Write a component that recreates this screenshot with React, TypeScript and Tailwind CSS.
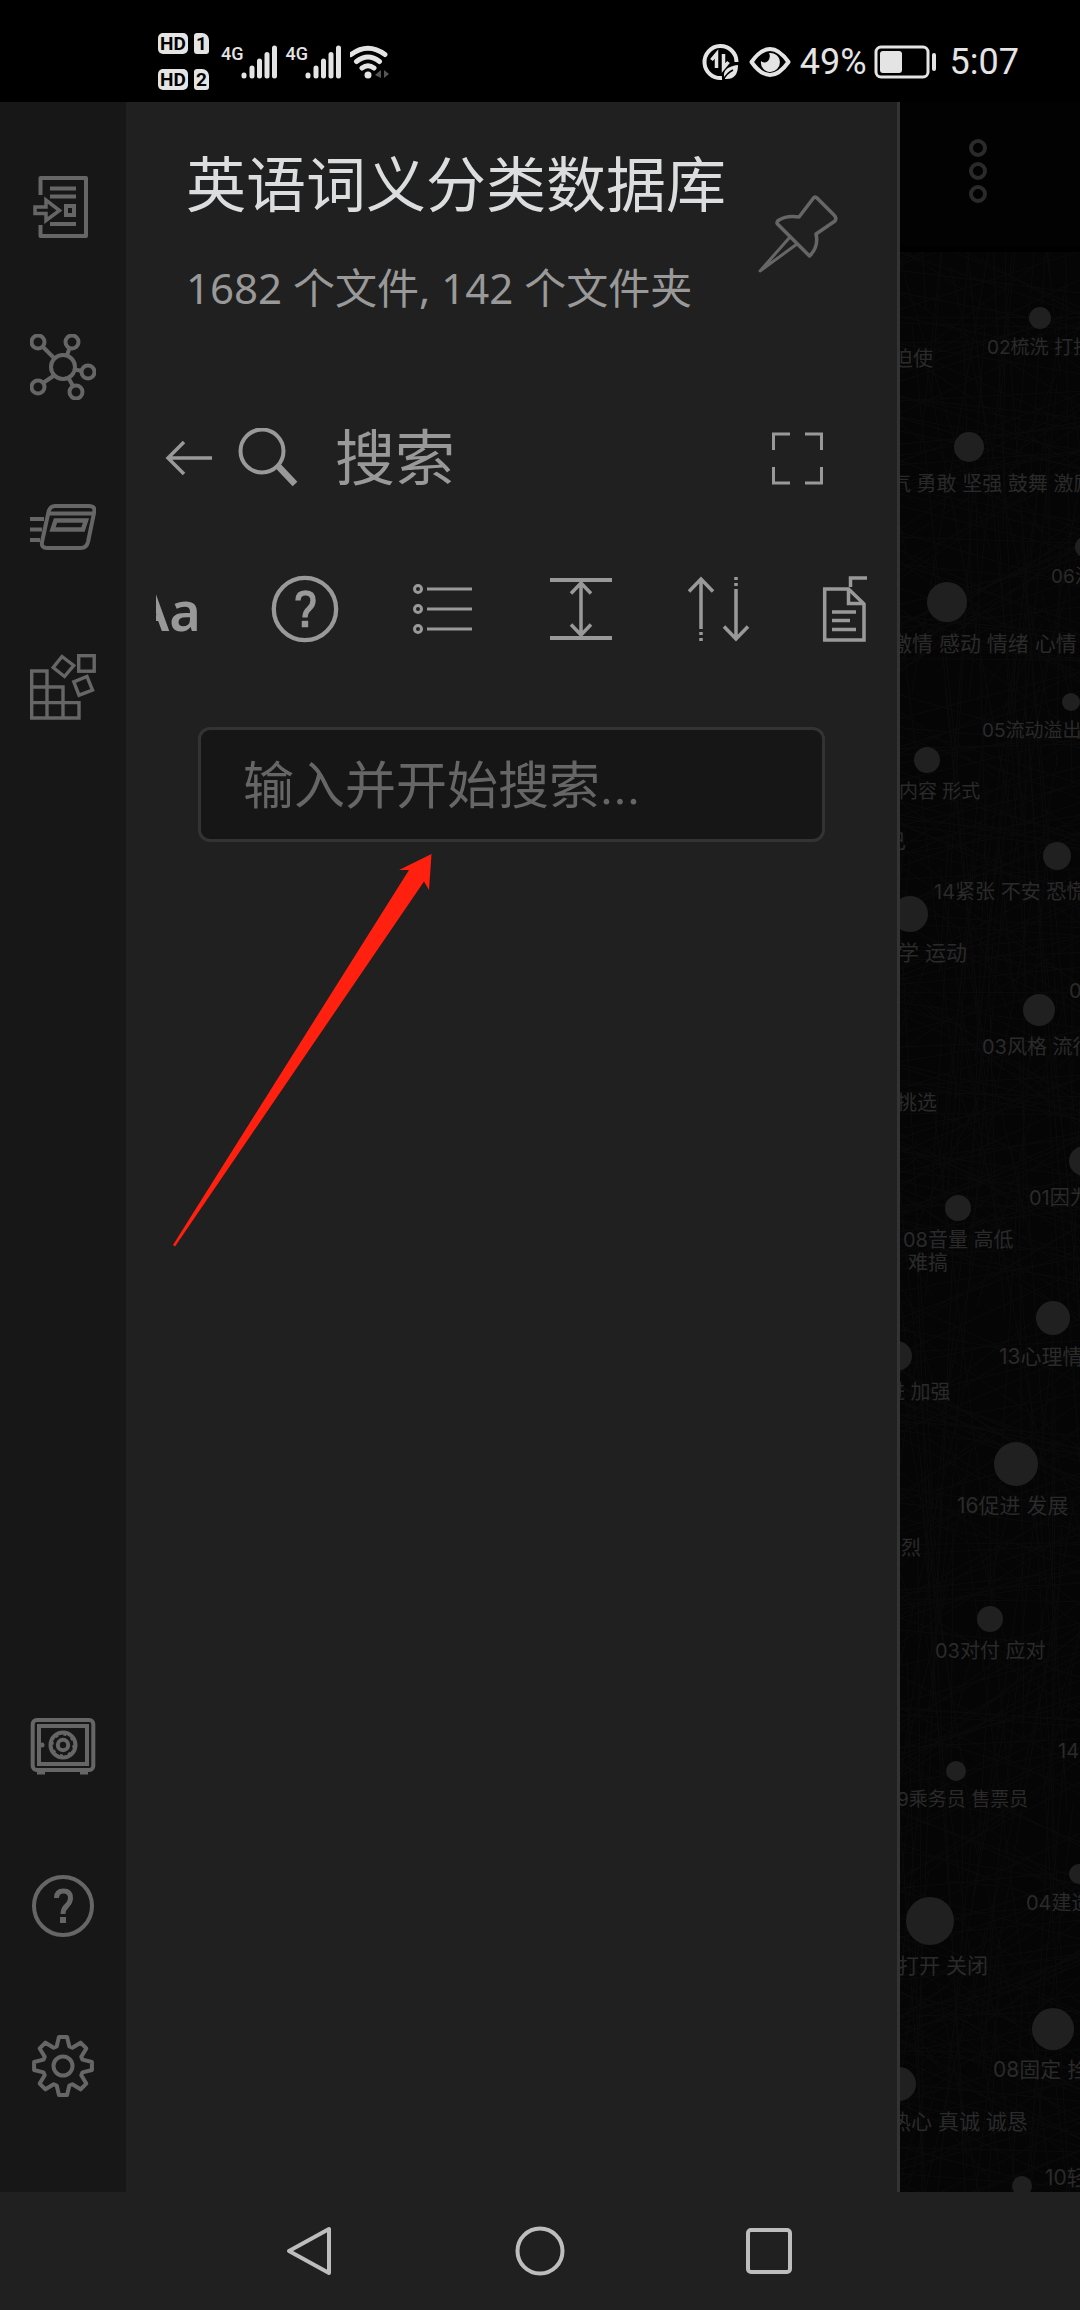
import React from 'react';

type IconProps = { children: React.ReactNode; className?: string; box?: string; width?: number };

function Icon({ children, className = 'size-[66px]', box = '0 0 66 66', width = 4 }: IconProps) {
  return (
    <svg className={className} viewBox={box} fill="none" stroke="currentColor" strokeWidth={width} aria-hidden="true">
      {children}
    </svg>
  );
}

/* ---------- status bar ---------- */

function HdBadge({ sim }: { sim: string }) {
  return (
    <div className="flex gap-[6px]">
      <span className="flex h-[21px] w-[30px] items-center justify-center rounded-[5px] bg-[#e4e4e4] text-[19px] font-bold leading-none text-black">
        HD
      </span>
      <span className="flex h-[21px] w-[15px] items-center justify-center rounded-[3px] rounded-tr-[7px] bg-[#e4e4e4] text-[19px] font-bold leading-none text-black">
        {sim}
      </span>
    </div>
  );
}

function Signal() {
  return (
    <div className="flex h-[34px] items-start">
      <span className="text-[18px] font-medium leading-[18px]">4G</span>
      <Icon className="-ml-1 h-[34px] w-[38px]" box="0 0 38 34" width={5}>
        <g strokeLinecap="round">
          <path d="M4 30v1M12 23v8M19.500 16v15M27 9.500v21.500M34.500 3v28" />
        </g>
      </Icon>
    </div>
  );
}

function StatusBar() {
  return (
    <header className="flex h-[102px] shrink-0 items-center justify-between bg-black pl-[158px] pr-[61px] pt-[21px] text-[#e4e4e4]">
      <div className="flex items-center">
        <div className="mr-3 flex flex-col gap-[15px]">
          <HdBadge sim="1" />
          <HdBadge sim="2" />
        </div>
        <div className="flex gap-2">
          <Signal />
          <Signal />
          <Icon className="h-[34px] w-[44px]" box="2 0 44 34" width={5}>
            <path d="M3 9.500Q20 -3 37 9.500M8.500 16.500Q20 7.500 31.500 16.500M14 23Q20 18.500 26 23" strokeLinecap="round" />
            <circle cx="20" cy="30" r="3.500" fill="currentColor" stroke="none" />
            <path d="M33 25v8l-6-3zM36 25l5 4l-5 4z" fill="#555" stroke="none" />
          </Icon>
        </div>
      </div>
      <div className="flex items-center">
        <Icon className="mr-[10px] size-[38px]" box="0 0 38 38">
          <path d="M35.500 19A16 16 0 1 0 21 35" />
          <path d="M15.500 25V11l-5 6M22.500 11v14l5-6" strokeWidth="3.500" />
          <path d="M23 33Q22 24 37 22Q37 37 24 36Z" fill="currentColor" stroke="none" />
          <path d="M22 37Q26 30 32 27" stroke="#000" strokeWidth="1.500" />
        </Icon>
        <Icon className="mr-[9px] h-[30px] w-[42px]" box="0 0 42 30">
          <path d="M2.500 15Q21 -11 39.500 15Q21 41 2.500 15Z" strokeLinejoin="round" />
          <path d="M20 6A9.500 9.500 0 1 1 12 14Q15 17 19 14Q22 10 20 6Z" fill="currentColor" stroke="none" />
        </Icon>
        <span className="text-[36px] leading-[36px]">49%</span>
        <Icon className="ml-[7px] mr-[12px] h-[34px] w-[64px]" box="0 0 64 34">
          <rect x="2" y="2" width="52" height="30" rx="5" strokeWidth="3" />
          <rect x="6" y="6" width="22" height="22" rx="3" fill="currentColor" stroke="none" />
          <path d="M60 10v14" strokeLinecap="round" />
        </Icon>
        <span className="text-[36px] leading-[36px]">5:07</span>
      </div>
    </header>
  );
}

/* ---------- left rail ---------- */

const gearPath = (() => {
  const points: string[] = [];
  const at = (radius: number, deg: number) => {
    const a = (deg * Math.PI) / 180;
    points.push(`${(33 + radius * Math.cos(a)).toFixed(2)} ${(33 + radius * Math.sin(a)).toFixed(2)}`);
  };
  for (let k = 0; k < 8; k += 1) {
    const c = k * 45;
    at(20.500, c - 18);
    at(29.200, c - 8);
    at(29.200, c + 8);
    at(20.500, c + 18);
  }
  return `M${points.join('L')}Z`;
})();

function QuestionMark() {
  return (
    <>
      <circle cx="33" cy="33" r="29" />
      <path d="M26.500 25Q26.500 18 33.500 18Q40.500 18 40.500 25Q40.500 29 37 32.500Q33 36 33 41" strokeWidth="5" />
      <path d="M33 44v6" strokeWidth="6" />
    </>
  );
}

const topRail = [
  {
    label: '快速切换',
    icon: (
      <>
        <path d="M10.500 21V4H56V62H10.500V51" strokeLinejoin="round" />
        <path d="M20 14.500h26M20 22.500h26M20 50h26" />
        <rect x="36" y="32" width="8" height="9" />
        <path d="M5 33H16V26L29.500 36.500L16 46.500V39.500H5Z" strokeWidth="3.500" />
      </>
    ),
  },
  {
    label: '关系图谱',
    icon: (
      <>
        <circle cx="33" cy="33" r="12" />
        <circle cx="8" cy="8" r="6.500" />
        <circle cx="42" cy="8" r="6.500" />
        <circle cx="58" cy="38" r="6.500" />
        <circle cx="46" cy="58" r="6.500" />
        <circle cx="8" cy="53" r="6.500" />
        <path d="M12.500 12.500L24.500 24.500M39.500 14L37 21.500M45 35.500L52 37M38.500 44L43 52M24 41.500L13 49" />
      </>
    ),
  },
  {
    label: '闪念卡片',
    icon: (
      <>
        <path d="M0 25H14M0 35.500H12M0 46H10" />
        <path d="M25 12H59Q66 12 64 19L58 48Q56.500 54 51 54H17Q11 54 12 48L18.500 18Q20 12 25 12Z" />
        <path d="M18 19.500H64" />
        <path d="M25.500 26.500H56L53 35.500H22.500Z" strokeWidth="4.500" />
      </>
    ),
  },
  {
    label: '模块',
    icon: (
      <g strokeWidth="3.400">
        <path d="M1.700 17H17V64M1.700 15.300V64H49V48.600H1.700M1.700 33H33V64" />
        <rect x="48.700" y="1.700" width="15.500" height="15.500" />
        <path d="M32 2.500L43.700 11.500L34.500 22.500L23.200 13.500Z" />
        <path d="M43.800 27.800L57 22.500L62.500 36L49 41.200Z" />
      </g>
    ),
  },
];

const bottomRail = [
  {
    label: '仓库',
    icon: (
      <>
        <rect x="2.700" y="7" width="60.600" height="50" rx="4" />
        <rect x="9" y="13" width="48" height="38" />
        <circle cx="33" cy="32" r="12.500" strokeWidth="4" />
        <circle cx="33" cy="32" r="10.500" strokeWidth="2" strokeDasharray="3 5.250" />
        <circle cx="33" cy="32" r="5.200" />
        <path d="M7 60h8M50 60h8" strokeWidth="3" />
        <circle cx="12" cy="32" r="2.500" fill="currentColor" stroke="none" />
      </>
    ),
  },
  { label: '帮助', icon: <QuestionMark /> },
  {
    label: '设置',
    icon: (
      <>
        <path d={gearPath} strokeLinejoin="round" />
        <circle cx="33" cy="33" r="9.500" />
      </>
    ),
  },
];

function RailButtons({ items }: { items: { label: string; icon: React.ReactNode }[] }) {
  return (
    <div className="flex flex-col">
      {items.map((item) => (
        <button key={item.label} type="button" aria-label={item.label} className="flex h-[160px] items-center justify-center">
          <Icon>{item.icon}</Icon>
        </button>
      ))}
    </div>
  );
}

/* ---------- search panel ---------- */

const tools = [
  {
    label: '帮助',
    icon: (
      <g transform="translate(-2.500 -2.500) scale(1.075)">
        <QuestionMark />
      </g>
    ),
  },
  {
    label: '列表',
    icon: (
      <g strokeWidth="3">
        <circle cx="8" cy="13" r="3.500" />
        <circle cx="8" cy="33" r="3.500" />
        <circle cx="8" cy="53" r="3.500" />
        <path d="M17 13h45M17 33h45M17 53h45" />
      </g>
    ),
  },
  {
    label: '展开',
    icon: (
      <>
        <path d="M2 4h62M2 62h62" />
        <path d="M33 7v52M23 17.500L33 7l10 10.500M23 48.500L33 59l10-10.500" strokeWidth="3.500" />
      </>
    ),
  },
  {
    label: '排序',
    icon: (
      <g strokeWidth="3.500">
        <path d="M15 3v50M3 15.500L15 3l12 12.500M50 13v50M38 50.500L50 63l12-12.500" />
        <path d="M15 56v3M15 62v3M50 1v3M50 7v3" />
      </g>
    ),
  },
  {
    label: '复制',
    icon: (
      <g strokeWidth="3.500">
        <path d="M0.700 13H24.500L40 28V64H0.700Z" />
        <path d="M24.500 13V27.500H40M8 36h24M8 44.500h18M8 53.500h24" />
        <path d="M26.500 11V2H50L64 16V52H44" />
      </g>
    ),
  },
];

function SearchPanel() {
  return (
    <section className="relative flex min-w-0 flex-1 flex-col border-r-[3px] border-[#333] bg-[#202020] pt-[49px] text-[#999]">
      <div className="flex items-center justify-between pl-[60px] pr-[59px]">
        <div className="whitespace-nowrap">
          <h1 className="text-[60px] leading-[72px] text-[#dcddde]">英语词义分类数据库</h1>
          <p className="mt-[41px] font-['Noto_Sans','Noto_Sans_CJK_SC',sans-serif] text-[42px] leading-[48px]">
            1682 个文件, 142 个文件夹
          </p>
        </div>
        <button type="button" aria-label="固定侧栏" className="pt-[4px] text-[#666]">
          <Icon className="size-[80px]" box="0 0 80 80">
            <path
              d="M55.500 4Q57 2 59 4L76 21Q79 24 77 27L58 40Q61 53 51.500 62L19.500 30Q18 28 21 26Q29 21 41 23Z"
              strokeWidth="3.500"
              strokeLinejoin="round"
            />
            <path d="M32 43L2 77L39 50" strokeWidth="3" strokeLinejoin="round" />
          </Icon>
        </button>
      </div>

      <div className="mt-[96px] flex h-[100px] items-center pl-[38px] pr-[73px]">
        <button type="button" aria-label="返回">
          <Icon className="h-[40px] w-[50px]" box="0 0 50 40">
            <path d="M48 20H4M20 4L4 20L20 36" strokeWidth="3.500" />
          </Icon>
        </button>
        <Icon className="ml-[24px] size-[60px]" box="0 0 60 60">
          <circle cx="24" cy="23" r="21.500" />
          <path d="M40 38L57 56" strokeWidth="6.500" />
        </Icon>
        <h2 className="ml-[37px] pt-1 text-[60px] leading-[72px]">搜索</h2>
        <button type="button" aria-label="全屏" className="ml-auto">
          <Icon className="size-[54px]" box="0 0 54 54">
            <path d="M3.500 19V3H20M35 3H51.500V19M51.500 36V52H35M20 52H3.500V36" strokeWidth="3" />
          </Icon>
        </button>
      </div>

      <div className="ml-[30px] mr-[30px] mt-[51px] flex h-[100px] overflow-hidden">
        <button
          type="button"
          aria-label="区分大小写"
          className="-ml-[58px] w-[138px] shrink-0 text-center font-['Noto_Sans'] text-[54px] font-semibold leading-[102px]"
        >
          Aa
        </button>
        {tools.map((tool) => (
          <button key={tool.label} type="button" aria-label={tool.label} className="flex w-[138px] shrink-0 items-center justify-center">
            <Icon className="size-[66px] overflow-visible">{tool.icon}</Icon>
          </button>
        ))}
      </div>

      <div className="mt-[68px] flex px-[72px]">
        <input
          type="text"
          aria-label="搜索"
          placeholder="输入并开始搜索..."
          className="h-[115px] min-w-0 flex-1 rounded-[12px] border-[3px] border-[#333] bg-[#161616] px-[42px] pt-[3px] text-[51px] text-[#dcddde] outline-none placeholder:text-[#666]"
        />
      </div>

      <svg className="absolute left-[46px] top-[750px] h-[396px] w-[262px]" viewBox="0 0 262 396" aria-hidden="true">
        <path d="M259.500 2L227 18H237L1 393L3 394.500L252 29.500L257 38Z" fill="#ff2010" />
      </svg>
    </section>
  );
}

/* ---------- graph behind the drawer ---------- */

/* x, y, radius */
const nodes: [number, number, number][] = [
  [140, 66, 11], [69, 195, 15], [186, 295, 11], [47, 350, 20], [171, 450, 9], [27, 508, 13],
  [157, 604, 14], [10, 662, 18], [139, 758, 16], [184, 909, 15], [58, 956, 13], [153, 1066, 17],
  [-3, 1104, 15], [116, 1212, 22], [90, 1367, 13], [56, 1519, 10], [179, 1622, 10], [30, 1669, 24],
  [153, 1777, 21], [-1, 1832, 17], [122, 1934, 10],
];

/* text, left, vertical centre, size class */
const s = 'text-[19px]';
const m = 'text-[20px]';
const l = 'text-[21px]';
const labels: [string, number, number, string][] = [
  ['02梳洗 打扮', 87, 96, s],
  ['迫使', -7, 107, m],
  ['气 勇敢 坚强 鼓舞 激励', -9, 232, m],
  ['06活动', 151, 325, s],
  ['激情 感动 情绪 心情', -9, 392, l],
  ['05流动溢出', 82, 479, s],
  ['内容 形式', -1, 540, s],
  ['己', -14, 590, m],
  ['14紧张 不安 恐慌', 34, 640, m],
  ['学 运动', -2, 701, l],
  ['03', 169, 739, m],
  ['03风格 流行', 82, 795, m],
  ['挑选', -3, 851, m],
  ['01因为', 129, 946, m],
  ['08音量 高低', 3, 988, m],
  ['难搞', 8, 1011, m],
  ['13心理情', 99, 1105, l],
  ['进 加强', -15, 1140, m],
  ['16促进 发展', 57, 1254, l],
  ['烈', 1, 1296, m],
  ['03对付 应对', 35, 1399, m],
  ['14', 158, 1499, m],
  ['9乘务员 售票员', -3, 1548, s],
  ['04建造', 126, 1651, m],
  ['打开 关闭', -2, 1714, l],
  ['08固定 拴', 93, 1818, l],
  ['热心 真诚 诚恳', -10, 1870, l],
  ['10轻', 145, 1926, l],
];

const edges = (() => {
  let seed = 11;
  const next = () => {
    seed = (seed * 16807) % 2147483647;
    return seed / 2147483647;
  };
  let d = '';
  for (let i = 0; i < 520; i += 1) {
    const y = next() * 2100 - 80;
    const slope = (next() - 0.5) * (i % 3 === 0 ? 1600 : 500);
    const x = i % 3 === 0 ? next() * 180 : -60;
    d += `M${Math.round(x)} ${Math.round(y)}L${Math.round(x + (i % 3 === 0 ? next() * 200 - 100 : 320))} ${Math.round(y + slope)}`;
  }
  return d;
})();

function GraphView() {
  return (
    <section className="flex w-1/6 shrink-0 flex-col bg-[#050505] text-[#2a2a2a]">
      <div className="flex h-[150px] shrink-0 justify-center border-b-[6px] border-black bg-[#020202] pr-[24px] pt-[36px]">
        <button type="button" aria-label="更多" className="h-[66px] w-[20px]">
          <Icon className="h-[66px] w-[20px]" box="0 0 20 66">
            <circle cx="10" cy="10" r="7" />
            <circle cx="10" cy="33" r="7" />
            <circle cx="10" cy="56" r="7" />
          </Icon>
        </button>
      </div>
      <div className="relative flex-1 overflow-hidden font-[Inter,'Noto_Sans_CJK_SC',sans-serif]">
        <svg className="absolute left-0 top-0 h-[1940px] w-[180px]" viewBox="0 0 180 1940" aria-hidden="true">
          <path d={edges} stroke="#0b0b0b" strokeWidth="1" fill="none" />
          {nodes.map(([x, y, r]) => (
            <circle key={`${x}-${y}`} cx={x} cy={y} r={r} fill="#202020" />
          ))}
        </svg>
        {labels.map(([text, left, middle, size]) => (
          <span
            key={`${text}-${middle}`}
            className={`absolute whitespace-nowrap leading-[24px] ${size}`}
            style={{ left, top: middle - 12 }}
          >
            {text}
          </span>
        ))}
      </div>
    </section>
  );
}

export default function App() {
  return (
    <div className="flex min-h-screen flex-col bg-[#202020] font-[Roboto,'Noto_Sans_CJK_SC',sans-serif]">
      <StatusBar />
      <main className="flex flex-1 overflow-hidden">
        <nav className="flex w-[126px] shrink-0 flex-col justify-between bg-[#171717] pb-[46px] pt-[25px] text-[#666]">
          <RailButtons items={topRail} />
          <RailButtons items={bottomRail} />
        </nav>
        <SearchPanel />
        <GraphView />
      </main>
      <footer className="flex h-[118px] shrink-0 items-center justify-center bg-[#202020] text-[#bdbdbd]">
        <button type="button" aria-label="后退" className="flex w-[230px] justify-center">
          <Icon className="size-[54px]" box="0 0 54 54">
            <path d="M6 27L46 5V49Z" strokeLinejoin="round" />
          </Icon>
        </button>
        <button type="button" aria-label="主屏幕" className="flex w-[230px] justify-center">
          <Icon className="size-[54px]" box="0 0 54 54">
            <circle cx="27" cy="27" r="22.500" />
          </Icon>
        </button>
        <button type="button" aria-label="最近任务" className="flex w-[230px] justify-center">
          <Icon className="size-[54px]" box="1 0 54 54">
            <rect x="6" y="6" width="42" height="42" rx="3" />
          </Icon>
        </button>
      </footer>
    </div>
  );
}
